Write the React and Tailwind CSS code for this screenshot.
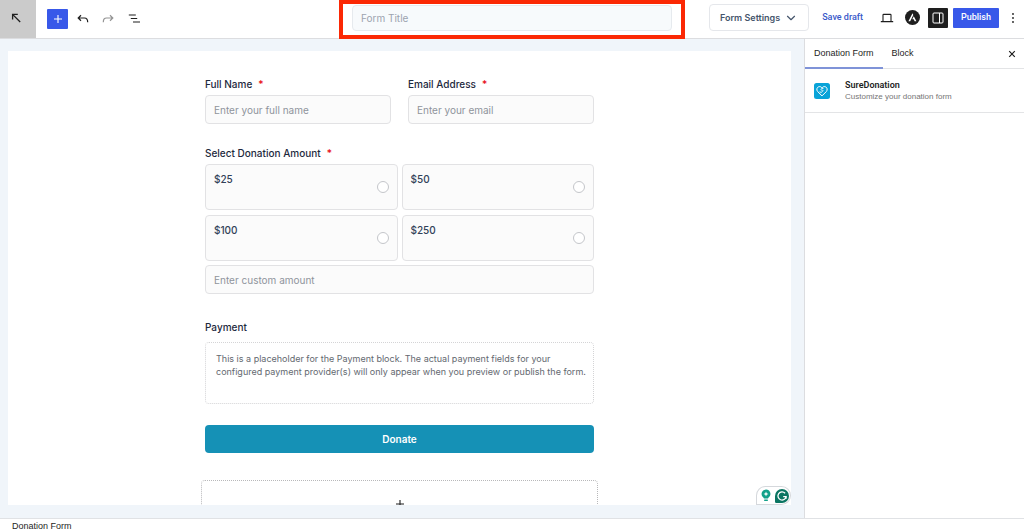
import { useState } from "react";
import { ChevronDown } from "lucide-react";

const AMOUNTS = ["$25", "$50", "$100", "$250"];

function Label({ children, required, ...props }) {
  return (
    <label className="block text-[10px] leading-4 font-medium text-slate-800" {...props}>
      {children}
      {required && <span className="ml-1.5 text-red-600">*</span>}
    </label>
  );
}

function TextField({ id, ...props }) {
  return (
    <input
      id={id}
      className="block h-[29px] w-full rounded border border-[#e2e2e4] bg-[#fbfbfb] px-2 text-[10px] text-slate-800 outline-none placeholder:text-[#8f949c]"
      {...props}
    />
  );
}

function AmountOption({ amount, checked, onChange }) {
  return (
    <label className="flex h-[46px] items-center justify-between rounded border border-[#e2e2e4] bg-[#fbfbfb] px-2">
      <span className="self-start pt-1.5 text-[10px] leading-4 font-medium text-slate-700">{amount}</span>
      <input
        type="radio"
        name="amount"
        value={amount}
        checked={checked}
        onChange={onChange}
        className="size-3 appearance-none rounded-full border border-[#c4c6ca] bg-white checked:border-4 checked:border-[#1591b6]"
      />
    </label>
  );
}

function Header() {
  return (
    <header className="flex h-[39px] shrink-0 border-b border-[#dcdde0] bg-white">
      <div className="flex flex-1 items-center pb-px">
        <button aria-label="Back" className="-mb-px flex h-[38px] w-9 items-center justify-center bg-[#cbcbcb] pr-1 pb-0.5">
          <svg width="12" height="12" viewBox="0 0 12 12" fill="none" stroke="#1e1e1e" strokeWidth="1.3">
            <path d="M2.6 7.6V2.4H7.8M2.8 2.6l7.4 7.4" />
          </svg>
        </button>
        <button aria-label="Add block" className="ml-[11px] flex h-5 w-[21px] items-center justify-center rounded-[1px] bg-[#3858e9]">
          <svg width="10" height="10" viewBox="0 0 10 10" stroke="#fff" strokeWidth="1.1">
            <path d="M5 1v8M1 5h8" />
          </svg>
        </button>
        <button aria-label="Undo" className="ml-[9px]">
          <svg width="12" height="12" viewBox="0 0 12 12" fill="none" stroke="#1e1e1e" strokeWidth="1.2">
            <path d="M4 2.3L1.2 5L4 7.7M1.3 5h6.2c2 0 3.2 1.2 3.2 4.3" />
          </svg>
        </button>
        <button aria-label="Redo" className="ml-[13px]">
          <svg width="12" height="12" viewBox="0 0 12 12" fill="none" stroke="#949494" strokeWidth="1.2">
            <path d="M8 2.3L10.8 5L8 7.7M10.7 5H4.5c-2 0-3.2 1.2-3.2 4.3" />
          </svg>
        </button>
        <button aria-label="Document overview" className="ml-3.5">
          <svg width="13" height="12" viewBox="0 0 13 12" stroke="#1e1e1e" strokeWidth="1.2">
            <path d="M.8 2h7M2.8 5.5h6.4M5 9h7" />
          </svg>
        </button>
      </div>

      <div className="-mb-px w-[346px] border-4 border-[#fb2804] px-[9px] pt-px">
        <input
          aria-label="Form Title"
          placeholder="Form Title"
          className="block h-[26px] w-full rounded border border-[#e6eaee] bg-[#f7fafc] px-2 text-[10px] outline-none placeholder:text-[#9ca3af]"
        />
      </div>

      <div className="flex flex-1 items-center justify-end pb-[3px] font-[Roboto,sans-serif] text-[#1e1e1e]">
        <button className="flex h-[27px] items-center gap-1 rounded border border-[#e5e7eb] px-2.5 font-[Inter,sans-serif] text-[9px] font-semibold whitespace-nowrap text-slate-600">
          Form Settings
          <ChevronDown size={14} strokeWidth={2} />
        </button>
        <button className="ml-[13px] text-[9px] font-medium whitespace-nowrap text-[#3858c9]">Save draft</button>
        <button aria-label="View" className="ml-[17px]">
          <svg width="14" height="12" viewBox="0 0 14 12" fill="none" stroke="#1e1e1e" strokeWidth="1.1">
            <path d="M3 9V3.1q0-.7.7-.7h6.6q.7 0 .7.7V9M.8 9.6h12.4" />
          </svg>
        </button>
        <button aria-label="Astra settings" className="ml-[11px]">
          <svg width="15" height="15" viewBox="0 0 15 15">
            <circle cx="7.5" cy="7.5" r="7.5" fill="#1e1e1e" />
            <path d="M7.5 3.2L3.4 11.3h1.8L8.3 5zM8.8 6.2L7.3 9.2h1.4l.9 2.1h1.8z" fill="#fff" />
          </svg>
        </button>
        <button aria-label="Settings" className="ml-2 flex size-5 items-center justify-center rounded-[1px] bg-[#1e1e1e]">
          <svg width="12" height="12" viewBox="0 0 12 12" fill="none" stroke="#fff" strokeWidth="1">
            <rect x="1" y="1" width="10" height="10" rx="1" />
            <path d="M7.5 1v10" />
          </svg>
        </button>
        <button className="ml-[5px] h-5 rounded-[1px] bg-[#3858e9] px-2 text-[9px] font-medium text-white">Publish</button>
        <button aria-label="Options" className="mr-2 ml-[11px]">
          <svg width="6" height="12" viewBox="0 0 6 12" fill="#1e1e1e">
            <circle cx="3" cy="2" r=".9" />
            <circle cx="3" cy="6" r=".9" />
            <circle cx="3" cy="10" r=".9" />
          </svg>
        </button>
      </div>
    </header>
  );
}

function DonationForm() {
  const [amount, setAmount] = useState(null);

  return (
    <form className="mx-auto w-full max-w-[389px] pt-[25px]" onSubmit={(e) => e.preventDefault()}>
      <div className="grid grid-cols-2 gap-[17px]">
        <div className="flex flex-col gap-[3px]">
          <Label htmlFor="name" required>Full Name</Label>
          <TextField id="name" placeholder="Enter your full name" />
        </div>
        <div className="flex flex-col gap-[3px]">
          <Label htmlFor="email" required>Email Address</Label>
          <TextField id="email" type="email" placeholder="Enter your email" />
        </div>
      </div>

      <div className="mt-[21px]">
        <Label htmlFor="custom" required>Select Donation Amount</Label>
        <div className="mt-[3px] mb-1 grid grid-cols-2 gap-x-1 gap-y-[5px]">
          {AMOUNTS.map((value) => (
            <AmountOption
              key={value}
              amount={value}
              checked={amount === value}
              onChange={() => setAmount(value)}
            />
          ))}
        </div>
        <TextField id="custom" placeholder="Enter custom amount" />
      </div>

      <h3 className="mt-[25px] text-[10px] leading-4 font-medium text-slate-800">Payment</h3>
      <div className="mt-[7px] h-[62px] rounded border border-dotted border-[#d4d4d6] py-[9px] pr-1 pl-2.5 text-[9px] leading-[13px] text-[#646970]">
        This is a placeholder for the Payment block. The actual payment fields for your configured payment
        provider(s) will only appear when you preview or publish the form.
      </div>

      <button className="mt-[21px] h-7 w-full rounded bg-[#1591b6] text-[10px] font-semibold text-white">Donate</button>

      {/* Block appender */}
      <button aria-label="Add block" className="-mx-1 mt-[27px] flex h-12 w-[calc(100%+8px)] items-center justify-center rounded-sm border border-dotted border-[#b8b8ba]">
        <svg width="10" height="10" viewBox="0 0 10 10" stroke="#1e1e1e" strokeWidth="1.1">
          <path d="M5 1v8M1 5h8" />
        </svg>
      </button>
    </form>
  );
}

function AssistantWidget() {
  return (
    <div className="absolute right-0 bottom-0 flex h-[19px] items-center gap-1 rounded-full rounded-bl-sm border border-[#d5d8dc] bg-white pr-px pl-1">
      <svg width="10" height="13" viewBox="0 0 10 13" fill="#12a08a">
        <path d="M5 .5a4.5 4.5 0 0 1 2.6 8.1L7 9.5H3l-.6-.9A4.5 4.5 0 0 1 5 .5z" />
        <rect x="3" y="10.5" width="4" height="1.5" rx=".7" />
        <path d="M5 2.5l.7 1.8 1.8.7-1.8.7L5 7.5l-.7-1.8L2.5 5l1.8-.7z" fill="#fff" />
      </svg>
      <svg width="14" height="14" viewBox="0 0 14 14">
        <path d="M7 0a7 7 0 1 1 0 14H1.2Q0 14 0 12.8V7a7 7 0 0 1 7-7z" fill="#0b7562" />
        <path d="M10.1 4.2A4.1 4.1 0 1 0 11.1 7.6H8.2M11.1 7.4V9.8" fill="none" stroke="#fff" strokeWidth="1.3" />
      </svg>
    </div>
  );
}

function Sidebar() {
  return (
    <aside className="w-[220px] shrink-0 border-l border-[#dcdde0] bg-white font-['Liberation_Sans',sans-serif] text-[#1e1e1e]">
      <div className="flex h-[30px] items-stretch border-b border-[#e3e4e6] text-[9px]">
        <button className="-mb-px border-b-2 border-[#7f93d8] px-[9px] pt-0.5 whitespace-nowrap">Donation Form</button>
        <button className="-mb-px border-b-2 border-transparent px-[9px] pt-0.5">Block</button>
        <button aria-label="Close settings" className="mr-2 ml-auto">
          <svg width="8" height="8" viewBox="0 0 8 8" stroke="#1e1e1e" strokeWidth="1.2">
            <path d="M1.2 1.2l5.6 5.6M6.8 1.2L1.2 6.8" />
          </svg>
        </button>
      </div>
      <div className="flex h-11 items-center gap-[15px] border-b border-[#e3e4e6] px-[9px]">
        <svg width="16" height="16" viewBox="0 0 16 16" fill="none" stroke="#fff" strokeWidth="1">
          <rect width="16" height="16" rx="2.5" fill="#09a3d8" stroke="none" />
          <path d="M8 12.9L3.7 8.6C2.2 7 2.7 4.3 4.8 3.7C6.2 3.3 7.3 3.9 8 5C8.7 3.9 9.8 3.3 11.2 3.7C13.3 4.3 13.8 7 12.3 8.6z" />
          <path d="M9.5 5.4Q6.9 5.2 7 6.4T8.6 7.3T8 8.9T6 8.2" strokeWidth=".8" />
        </svg>
        <div>
          <h2 className="font-[Roboto,sans-serif] text-[9px] leading-3 font-semibold">SureDonation</h2>
          <p className="text-[8px] leading-3 text-[#757575]">Customize your donation form</p>
        </div>
      </div>
    </aside>
  );
}

export default function App() {
  return (
    <div className="flex h-screen flex-col overflow-hidden bg-white font-[Inter,sans-serif]">
      <Header />
      <div className="flex min-h-0 flex-1">
        <main className="flex min-w-0 flex-1 bg-[#f0f5fa] pt-3 pr-[13px] pb-[13px] pl-2">
          <div className="relative flex-1 overflow-hidden bg-white">
            <DonationForm />
            <AssistantWidget />
          </div>
        </main>
        <Sidebar />
      </div>
      <footer className="h-[11px] shrink-0 border-t border-[#e0e2e5] px-3 pt-px font-['Liberation_Sans',sans-serif] text-[9px] leading-3 text-[#1e1e1e]">
        Donation Form
      </footer>
    </div>
  );
}
